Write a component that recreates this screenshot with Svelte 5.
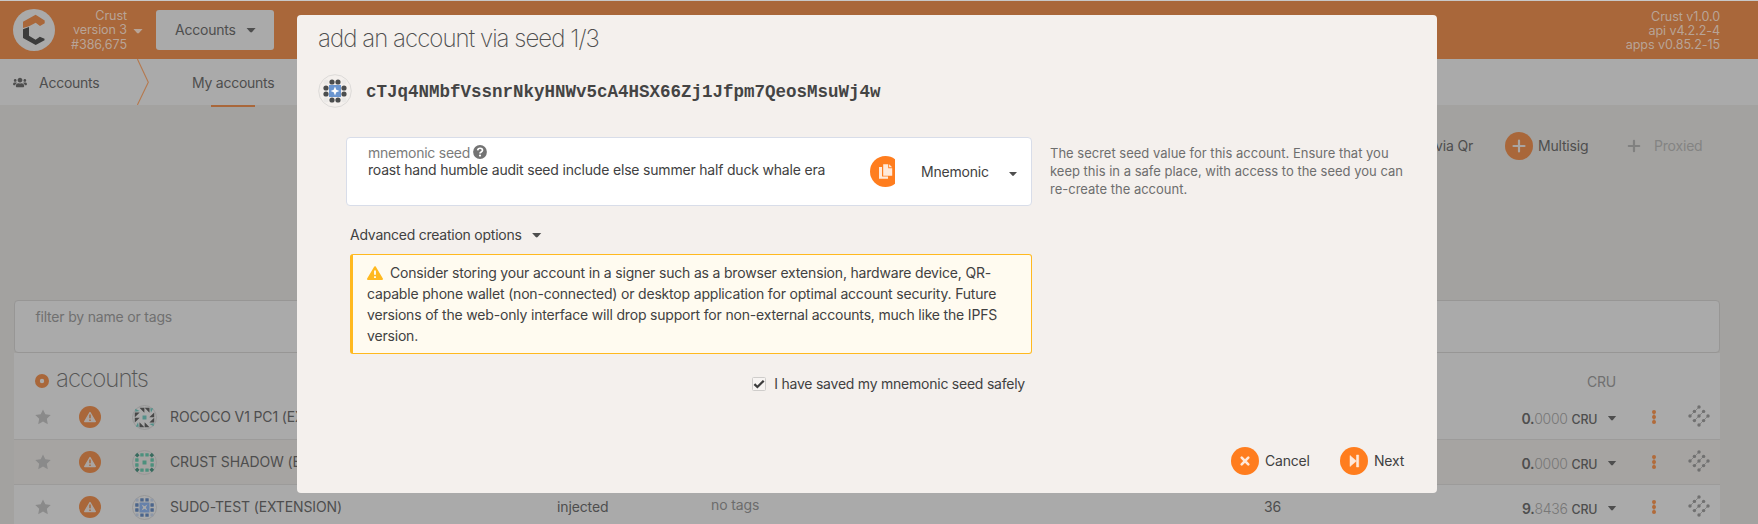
<script>
  const rows = [
    { name: 'ROCOCO V1 PC1 (EXTENSION)', type: '', tags: '', tx: '', whole: '0', frac: '0000', art: 'rococo' },
    { name: 'CRUST SHADOW (EXTENSION)', type: '', tags: '', tx: '', whole: '0', frac: '0000', art: 'shadow' },
    { name: 'SUDO-TEST (EXTENSION)', type: 'injected', tags: 'no tags', tx: '36', whole: '9', frac: '8436', art: 'sudo' }
  ];
  const edge = [[-3, -9], [3, -9], [-3, 9], [3, 9], [-9, -3], [-9, 3], [9, -3], [9, 3]];
  const corners = [[-9, -9], [9, -9], [-9, 9], [9, 9]];
  const links = [[0, -9], [4.6, -4.6], [9, 0], [4.6, 4.6], [0, 9], [-4.6, 4.6], [-9, 0], [-4.6, -4.6], [0, 0]];
</script>

{#snippet art(kind)}
  <svg class="ident" viewBox="-17 -17 34 34">
    <circle r="16.3" class="ring" />
    {#if kind === 'rococo'}
      {#each [0, 90, 180, 270] as a}
        <g transform="rotate({a})">
          <path d="M-6.8-13.2H-.2v6.6zM.2-13.2h6.6v6.6z" fill="#474747" />
          <path d="M7.8-12.6h4l-3 6z" fill="#54908a" />
        </g>
      {/each}
      <rect x="-2.7" y="-2.7" width="5.4" height="5.4" fill="#54908a" />
    {:else if kind === 'shadow'}
      {#each edge as [x, y]}
        <rect x={x * 1.15 - 2.3} y={y * 1.15 - 2.3} width="4.6" height="4.6" rx=".5" fill="#4c907d" />
      {/each}
      {#each corners as [x, y]}
        <path d="M0-3.2L3.2 0 0 3.2-3.2 0z" transform="translate({x * 1.1} {y * 1.1})" fill="#386b5e" />
      {/each}
      <rect x="-2.7" y="-2.7" width="5.4" height="5.4" fill="#4c907d" />
    {:else if kind === 'sudo'}
      {#each edge as [x, y]}
        <rect x={x * 1.15 - 2.3} y={y * 1.15 - 2.3} width="4.6" height="4.6" rx=".5" fill="#4b658b" />
      {/each}
      {#each corners as [x, y]}
        <rect x={x * 1.12 - 2} y={y * 1.12 - 2} width="4" height="4" fill="#8e98a8" />
      {/each}
      <rect x="-6.8" y="-6.8" width="13.6" height="13.6" fill="#6681aa" />
      <path d="M-4-4L0-1.8 4-4 1.8 0 4 4 0 1.8-4 4-1.8 0z" fill="#aaa" />
    {:else}
      {#each edge as [x, y]}
        <circle cx={x} cy={y} r="2.6" fill="#4b4d4e" />
      {/each}
      {#each corners as [x, y]}
        <circle cx={x} cy={y} r="2.5" fill="#ebe9e7" />
      {/each}
      <rect x="-6" y="-6" width="12" height="12" fill="#6b96d0" />
      <path d="M0-4.5L1.3-1.3 4.5 0 1.3 1.3 0 4.5-1.3 1.3-4.5 0-1.3-1.3z" fill="#fff" />
    {/if}
  </svg>
{/snippet}

<div class="page">
  <header>
    <svg class="logo" viewBox="0 0 42 42">
      <circle cx="21" cy="21" r="21" fill="#aaa" />
      <path d="M10 19V12.8L22.6 5.8 31.7 11.5v2.8l-4.7 2.8-4.3-3.4-6.7 3.6z" fill="#a9673a" />
      <path d="M10 20.3l6-2.2v8.6l6.6 4 4.2-3 4.7 2.1v1.4L22.7 36 10 29z" fill="#3c3c3c" />
    </svg>
    <div class="chain">Crust<br />version 3<br />#386,675</div>
    <i class="caret pale"></i>
    <button>Accounts<i class="caret"></i></button>
    <div class="versions">Crust v1.0.0<br />api v4.2.2-4<br />apps v0.85.2-15</div>
  </header>
  <nav>
    <svg class="users" viewBox="0 0 640 512" fill="#4e4e4e"><path d="M96 224c35 0 64-29 64-64s-29-64-64-64-64 29-64 64 29 64 64 64zm448 0c35 0 64-29 64-64s-29-64-64-64-64 29-64 64 29 64 64 64zm32 32h-64c-18 0-34 7-45 19 40 22 69 62 75 109h66c18 0 32-14 32-32v-32c0-35-29-64-64-64zm-256 0c62 0 112-50 112-112S382 32 320 32 208 82 208 144s50 112 112 112zm77 32h-8c-21 10-44 16-69 16s-48-6-69-16h-8c-64 0-115 52-115 115v29c0 27 21 48 48 48h288c27 0 48-21 48-48v-29c0-63-51-115-115-115zm-224-13c-11-12-27-19-45-19H64c-35 0-64 29-64 64v32c0 18 14 32 32 32h66c6-47 35-87 75-109z" /></svg>
    <span class="section">Accounts</span>
    <svg class="sep" viewBox="0 0 12 46"><path d="M.4 0L11.3 23.3.4 46" fill="none" stroke="#b5794e" stroke-width="1.1" /></svg>
    <span class="tab">My accounts</span>
  </nav>
  <div class="actions">
    <span>via Qr</span>
    <svg class="round" viewBox="-14 -14 28 28"><circle r="14" fill="#a9673a" /><path d="M-5.5 0h11M0-5.5v11" stroke="#aaa5a2" stroke-width="2.2" stroke-linecap="round" /></svg>
    <span class="multi">Multisig</span>
    <svg class="round" viewBox="-14 -14 28 28"><path d="M-5.2 0h10.4M0-5.2v10.4" stroke="#818180" stroke-width="2.2" stroke-linecap="round" /></svg>
    <span class="prox">Proxied</span>
  </div>
  <main>
    <div class="filter">filter by name or tags</div>
    <section>
      <div class="thead">
        <svg class="dot" viewBox="-7 -7 14 14"><circle r="4.6" fill="none" stroke="#a9673a" stroke-width="4.8" /></svg>
        <h1>accounts</h1>
        <span class="unit">CRU</span>
      </div>
      {#each rows as r}
        <div class="row">
          <svg class="star" viewBox="-8 -8 16 16"><path d="M0-7.6L2.3-2.7 7.7-2 3.8 1.8 4.8 7.2 0 4.6-4.8 7.2-3.8 1.8-7.7-2-2.3-2.7z" fill="#8a8a8a" /></svg>
          <svg class="warn" viewBox="-11 -11 22 22"><circle r="11" fill="#a9673a" /><path d="M0-4.5L5.3 4.5H-5.3z" fill="#aaa5a2" stroke="#aaa5a2" stroke-width="1.4" stroke-linejoin="round" /><path d="M0-2.4v3.6M0 2.4v1.6" stroke="#a9673a" stroke-width="1.5" /></svg>
          {@render art(r.art)}
          <span class="name">{r.name}</span>
          <span class="type">{r.type}</span>
          <span class="tags">{r.tags}</span>
          <span class="tx">{r.tx}</span>
          <span class="bal"><b>{r.whole}.</b><em>{r.frac}</em><strong>CRU</strong></span>
          <i class="caret small"></i>
          <svg class="dots" viewBox="0 0 4 16" fill="#b16b3a"><path d="M1.6 2h.8v12h-.8z" /><circle cx="2" cy="3" r="2" /><circle cx="2" cy="8" r="2" /><circle cx="2" cy="13" r="2" /></svg>
          <svg class="net" viewBox="-11 -11 22 22">
            <path d="M-9 0L0-9M-4.6 4.6L4.6-4.6M0 9L9 0" stroke="#858585" stroke-width="1" />
            {#each links as [x, y]}<circle cx={x} cy={y} r="1.7" fill="#707070" />{/each}
          </svg>
        </div>
      {/each}
    </section>
  </main>
</div>

<div class="dialog">
  <h2>add an account via seed 1/3</h2>
  <div class="address">{@render art('main')}<code>cTJq4NMbfVssnrNkyHNWv5cA4HSX66Zj1Jfpm7QeosMsuWj4w</code></div>
  <div class="columns">
    <div class="left">
      <div class="seed">
        <div class="text">
          <div class="label">mnemonic seed
            <svg viewBox="-7 -7 14 14"><circle r="6.9" fill="#737373" /><path d="M-2.3-1.6C-2.1-4.4 2.5-4.4 2.5-1.8 2.5 0 0-.2 0 1.5" fill="none" stroke="#fff" stroke-width="1.7" /><circle cy="3.6" r="1.1" fill="#fff" /></svg>
          </div>
          <div class="value">roast hand humble audit seed include else summer half duck whale era</div>
        </div>
        <div class="copy">
          <svg viewBox="-15.5 -15.5 31 31"><circle r="15.5" fill="#ff7d1e" /><path d="M-6.5-4.5h3V5h6v2.3h-9z" fill="#ffe9da" /><path d="M-2.3-7.3h5v4h4V4.2h-9zM3.6-7.3L6.7-4.2H3.6z" fill="#ffe9da" /></svg>
        </div>
        <span class="kind">Mnemonic</span>
        <i class="caret tiny"></i>
      </div>
      <div class="advanced">Advanced creation options<i class="caret"></i></div>
      <div class="notice"><svg viewBox="0 0 16 14"><path d="M8 1.2L15 13H1z" fill="#ffb91f" stroke="#ffb91f" stroke-width="2" stroke-linejoin="round" /><path d="M8 4.6v4.2M8 10.2v1.9" stroke="#fffbf0" stroke-width="1.9" /></svg>Consider storing your account in a signer such as a browser extension, hardware device, QR-<br />capable phone wallet (non-connected) or desktop application for optimal account security. Future<br />versions of the web-only interface will drop support for non-external accounts, much like the IPFS<br />version.</div>
      <div class="check">
        <svg viewBox="0 0 14 14"><rect x=".5" y=".5" width="13" height="13" rx="1" fill="#f7f4f2" stroke="#cfcdcb" /><path d="M2.4 7.1L5.4 10 11.7 3.7" fill="none" stroke="#3d3d3d" stroke-width="2.3" /></svg>
        <span>I have saved my mnemonic seed safely</span>
      </div>
    </div>
    <p>The secret seed value for this account. Ensure that you<br />keep this in a safe place, with access to the seed you can<br />re-create the account.</p>
  </div>
  <footer>
    <svg class="round" viewBox="-14 -14 28 28"><circle r="14" fill="#ff7d1e" /><path d="M-3.3-3.3L3.3 3.3M3.3-3.3L-3.3 3.3" stroke="#ffe9da" stroke-width="2.6" stroke-linecap="round" /></svg>
    <span class="cancel">Cancel</span>
    <svg class="round" viewBox="-14 -14 28 28"><circle r="14" fill="#ff7d1e" /><path d="M-4-5.5L2.4 0-4 5.5zM2.5-6h2.2V6H2.5z" fill="#ffe9da" stroke="#ffe9da" stroke-width=".5" /></svg>
    <span class="next">Next</span>
  </footer>
</div>

<style>
  :global(body) { background: #a3a2a0; overflow: hidden; }
  .page, .dialog { font: 14px/20px Inter, "Liberation Sans", sans-serif; letter-spacing: -.19px; color: #4e4e4e; box-sizing: border-box; white-space: nowrap; }
  .page { height: 524px; overflow: hidden; border-top: 1px solid #c8c8c8; }
  .page *, .dialog * { box-sizing: border-box; }
  svg { display: block; flex: none; }
  .caret { flex: none; width: 10px; height: 5px; background: #4e4e4e; clip-path: polygon(0 0, 100% 0, 60% 90%, 50% 100%, 40% 90%); }

  header { height: 58px; background: #a9673a; display: flex; align-items: center; padding: 0 38px 0 13px; }
  .logo { width: 42px; height: 42px; }
  .chain, .versions { font-size: 12.6px; line-height: 14.3px; letter-spacing: -.1px; text-align: right; color: #b8a497; padding-top: 1px; }
  .chain { width: 72px; }
  .caret.pale { background: #b8a497; margin: 2px 13px 0 6px; }
  button { width: 118px; height: 40px; margin: 0; padding: 0 0 0 19px; border: 0; border-radius: 3px; background: #aaa; display: flex; align-items: center; font: inherit; letter-spacing: -.23px; color: inherit; }
  button .caret { margin-left: 10.5px; }
  .versions { margin-left: auto; line-height: 13.7px; padding-top: 2px; }

  nav { height: 46px; background: #aaa; display: flex; align-items: center; padding-left: 13px; letter-spacing: -.25px; }
  .users { width: 14px; height: 11px; }
  .section { width: 98px; padding: 2px 0 0 12px; }
  .sep { width: 12px; height: 46px; margin-left: 12px; }
  .tab { position: relative; margin-left: 43px; padding-top: 2px; }
  .tab::after { content: ""; position: absolute; left: 19px; bottom: -14px; width: 44px; height: 2px; background: #a9673a; }

  .actions { height: 194px; display: flex; padding: 27px 57px 0 0; justify-content: flex-end; align-items: flex-start; line-height: 28px; }
  .round { width: 28px; height: 28px; }
  .actions .round { margin-left: 32px; }
  .actions .multi { margin-left: 5px; width: 50px; }
  .actions .prox { margin-left: 6px; width: 47px; color: #848483; }

  main { margin: 0 38px 0 14px; }
  .filter { height: 53px; margin-top: 1px; border: 1px solid #979695; border-radius: 4px; background: #aaa; padding: 6px 20.5px; color: #707070; letter-spacing: -.19px; }
  section { background: #aaa; }
  .thead { height: 42px; display: flex; align-items: center; padding: 14px 104px 0 21px; }
  .dot { width: 14px; height: 14px; }
  h1, h2 { font-weight: 200; font-size: 24px; line-height: 28px; letter-spacing: -.96px; margin: 0; }
  h1 { margin: -4px 0 0 7px; color: #555; }
  .unit { margin: 2px 0 0 auto; color: #707070; }
  .row { height: 45px; display: grid; grid-template-columns: 47px 55px 33px 387px 154px 553px 100px 233px 55px 36px 30px; align-items: center; padding-left: 21px; border-bottom: 1px solid #9c9b9a; letter-spacing: -.13px; }
  .row:nth-child(odd) { background: #a6a4a2; }
  .star { width: 16px; height: 16px; }
  .warn { width: 22px; height: 22px; margin-left: -3px; }
  .row .ident { width: 25px; height: 25px; margin-left: -5px; }
  .ring { fill: none; stroke: #969696; stroke-width: 1.2; }
  .tags { color: #6c6c6c; margin-top: -4px; }
  .bal { display: flex; align-items: baseline; margin-top: 5px; justify-content: flex-end; letter-spacing: -.3px; }
  .bal b { font-weight: 600; }
  .bal em { font-style: normal; font-weight: 300; color: #777; }
  .bal strong { font-weight: 500; font-size: 12.4px; margin-left: 4px; }
  .caret.small { width: 9px; margin: 2px 0 0 10.5px; }
  .dots { width: 4px; height: 16px; }
  .net { width: 22px; height: 22px; margin-top: -2px; }

  .dialog { position: absolute; left: 297px; top: 15px; width: 1140px; height: 478px; background: #f4f0ed; border-radius: 4px; padding: 10px 22px 0 21px; color: #414141; }
  .dialog .ring { stroke: #dcdad8; stroke-width: 1; }
  .dialog .ident { width: 34px; height: 34px; }
  h2 { color: #4e4e4e; }
  .address { display: flex; align-items: center; height: 34px; margin-top: 21px; }
  code { font: bold 17.5px/20px "Liberation Mono", monospace; letter-spacing: 0; margin-left: 14px; padding-top: 1px; color: #444; }
  .columns { display: flex; padding-left: 28px; margin-top: 29px; }
  .left { width: 686px; }
  .seed { height: 69px; border: 1px solid #d8dde9; border-radius: 4px; background: #fff; display: flex; align-items: center; padding-left: 21px; }
  .text { width: 502px; align-self: flex-start; padding-top: 5px; }
  .label { display: flex; align-items: center; gap: 3px; color: #7b7b7b; line-height: 20px; letter-spacing: -.24px; }
  .label svg { width: 14px; height: 14px; margin-top: -2px; }
  .value { line-height: 16px; margin-top: -1px; }
  .copy { width: 25px; overflow: hidden; }
  .copy svg { width: 31px; height: 31px; }
  .kind { width: 88px; margin-left: 26px; }
  .caret.tiny { width: 8px; height: 4px; margin-top: 5px; }
  .advanced { display: flex; align-items: center; margin: 19px 0 9px 4px; letter-spacing: -.24px; }
  .advanced .caret { margin-left: 10px; }
  .notice { margin-left: 4px; height: 100px; border: 1px solid #ffb91f; border-left-width: 3px; border-radius: 3px; background: #fffbf0; padding: 7px 0 0 14px; line-height: 21px; letter-spacing: -.185px; }
  .notice svg { display: inline-block; width: 16px; height: 14px; margin-right: 7px; vertical-align: -2px; }
  .check { display: flex; align-items: center; justify-content: flex-end; gap: 8px; margin: 20px 7px 0 0; letter-spacing: -.235px; }
  .check svg { width: 14px; height: 14px; }
  p { margin: 7px 0 0 18px; font-size: 13px; line-height: 18px; letter-spacing: 0; color: #6e6e6e; }
  footer { display: flex; justify-content: flex-end; align-items: center; margin-top: 53px; padding-right: 11px; gap: 6px; }
  .cancel { width: 69px; }
  .next { width: 30px; }
</style>
